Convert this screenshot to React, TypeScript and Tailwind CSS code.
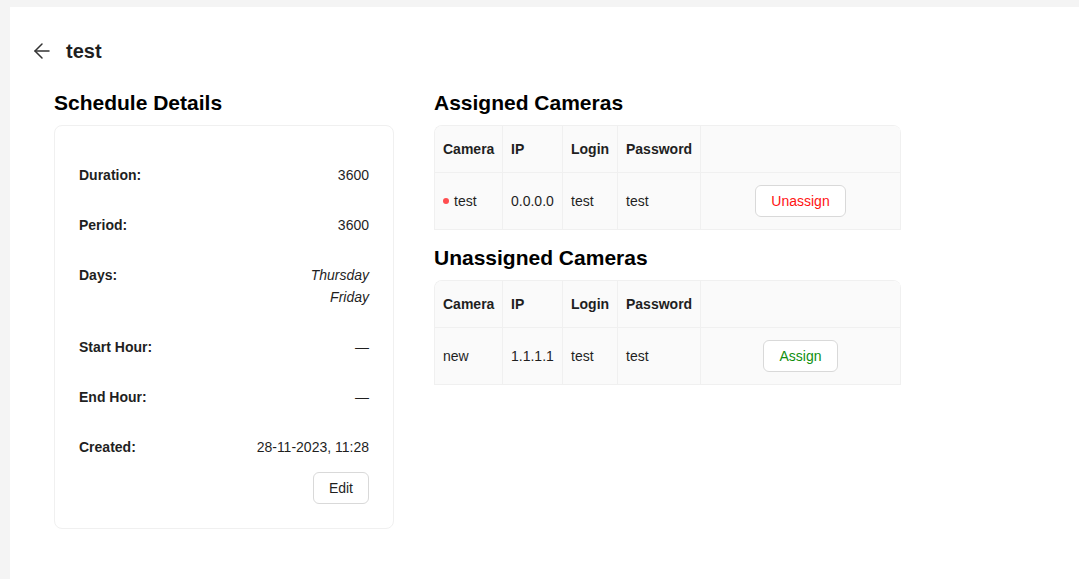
import { ArrowLeft } from 'lucide-react';

const details = [
    { label: 'Duration:', value: ['3600'] },
    { label: 'Period:', value: ['3600'] },
    { label: 'Days:', value: ['Thursday', 'Friday'], italic: true },
    { label: 'Start Hour:', value: ['—'] },
    { label: 'End Hour:', value: ['—'] },
    { label: 'Created:', value: ['28-11-2023, 11:28'] },
];

const CameraTable = ({ rows, assigned }: { rows: any[]; assigned: boolean }) => (
    <div className="w-[467px] border-l border-t border-[#f0f0f0] rounded-t-lg overflow-hidden">
        <table className="w-full table-fixed border-separate border-spacing-0 text-sm text-[#1f1f1f]">
            <thead>
                <tr className="bg-[#fafafa] text-left">
                    <th className="w-[68px] px-2 py-3 leading-[22px] font-bold border-r border-b border-[#f0f0f0]">Camera</th>
                    <th className="w-[60px] px-2 py-3 leading-[22px] font-bold border-r border-b border-[#f0f0f0]">IP</th>
                    <th className="w-[55px] px-2 py-3 leading-[22px] font-bold border-r border-b border-[#f0f0f0]">Login</th>
                    <th className="w-[83px] px-2 py-3 leading-[22px] font-bold border-r border-b border-[#f0f0f0]">Password</th>
                    <th className="px-2 py-3 leading-[22px] border-r border-b border-[#f0f0f0]"></th>
                </tr>
            </thead>
            <tbody>
                {rows.map((row) => (
                    <tr key={row.name} className="bg-[#fafafa]">
                        <td className="px-2 py-3 leading-[22px] border-r border-b border-[#f0f0f0]">
                            <span className="flex items-center gap-[5px]">
                                {assigned && <span className="w-[6px] h-[6px] rounded-full bg-[#ff4d4f]"></span>}
                                {row.name}
                            </span>
                        </td>
                        <td className="px-2 py-3 leading-[22px] border-r border-b border-[#f0f0f0]">{row.ip}</td>
                        <td className="px-2 py-3 leading-[22px] border-r border-b border-[#f0f0f0]">{row.login}</td>
                        <td className="px-2 py-3 leading-[22px] border-r border-b border-[#f0f0f0]">{row.password}</td>
                        <td className="px-2 py-3 border-r border-b border-[#f0f0f0] text-center">
                            {assigned ? (
                                <button className="h-8 px-[15px] bg-white border border-[#d9d9d9] rounded-md text-[#ff1212]">Unassign</button>
                            ) : (
                                <button className="h-8 px-[15px] bg-white border border-[#d9d9d9] rounded-md text-[#11900f]">Assign</button>
                            )}
                        </td>
                    </tr>
                ))}
            </tbody>
        </table>
    </div>
);

export default function App() {
    return (
        <div className="min-h-screen bg-[#f4f4f4] pl-[10px] pt-[7px] font-['Liberation_Sans',Arial,sans-serif]">
            <div className="bg-white min-h-[572px] pl-5 pt-[30px]">
                {/* Header */}
                <div className="flex items-center h-7">
                    <button className="w-6 h-6 flex items-center justify-center text-[#333]">
                        <ArrowLeft size={24} strokeWidth={1.5} />
                    </button>
                    <h1 className="ml-3 text-xl font-bold leading-7 text-[#1f1f1f]">test</h1>
                </div>

                <div className="flex gap-10 pl-6 mt-6">
                    {/* Schedule details */}
                    <div className="w-[340px]">
                        <h2 className="text-[21px] font-bold leading-7 text-black mb-2">Schedule Details</h2>
                        <div className="border border-[#f0f0f0] rounded-lg p-6 text-sm text-[#1f1f1f]">
                            {details.map((d) => (
                                <div key={d.label} className="flex justify-between py-[14px] leading-[22px]">
                                    <span className="font-bold">{d.label}</span>
                                    <div className={d.italic ? 'text-right italic' : 'text-right'}>
                                        {d.value.map((v) => (
                                            <div key={v}>{v}</div>
                                        ))}
                                    </div>
                                </div>
                            ))}
                            <div className="flex justify-end">
                                <button className="h-8 px-[15px] bg-white border border-[#d9d9d9] rounded-md">Edit</button>
                            </div>
                        </div>
                    </div>

                    {/* Cameras */}
                    <div>
                        <h2 className="text-[21px] font-bold leading-7 text-black mb-2">Assigned Cameras</h2>
                        <CameraTable assigned rows={[{ name: 'test', ip: '0.0.0.0', login: 'test', password: 'test' }]} />
                        <h2 className="text-[21px] font-bold leading-7 text-black mb-2 mt-[14px]">Unassigned Cameras</h2>
                        <CameraTable assigned={false} rows={[{ name: 'new', ip: '1.1.1.1', login: 'test', password: 'test' }]} />
                    </div>
                </div>
            </div>
        </div>
    );
}
